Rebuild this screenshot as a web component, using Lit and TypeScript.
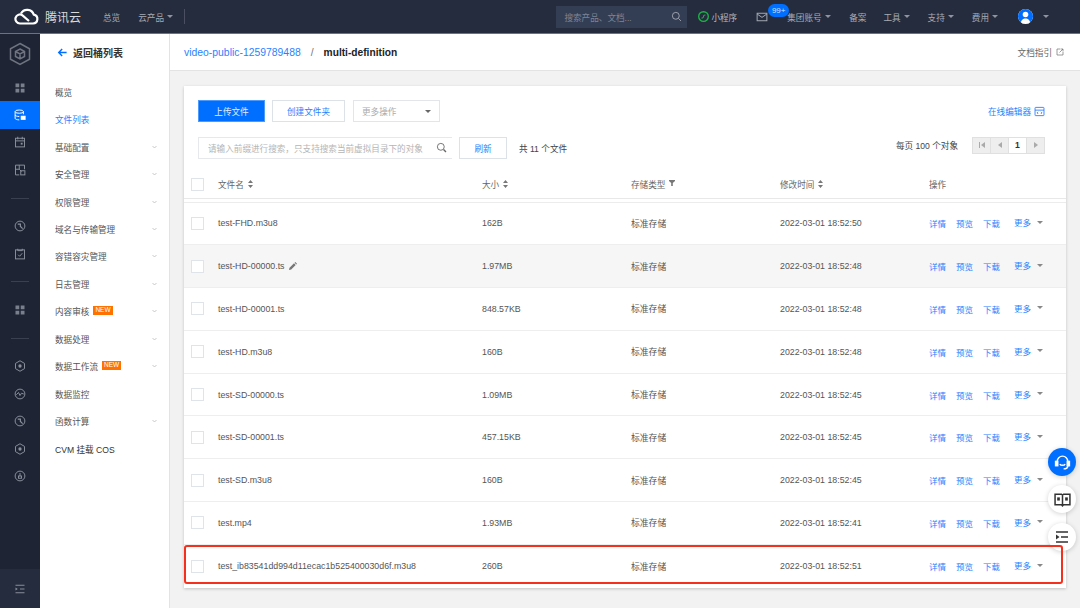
import { LitElement, html, css, svg } from "lit";
import { customElement } from "lit/decorators.js";

const files = [
  ["test-FHD.m3u8", "162B", "2022-03-01 18:52:50"],
  ["test-HD-00000.ts", "1.97MB", "2022-03-01 18:52:48"],
  ["test-HD-00001.ts", "848.57KB", "2022-03-01 18:52:48"],
  ["test-HD.m3u8", "160B", "2022-03-01 18:52:48"],
  ["test-SD-00000.ts", "1.09MB", "2022-03-01 18:52:45"],
  ["test-SD-00001.ts", "457.15KB", "2022-03-01 18:52:45"],
  ["test-SD.m3u8", "160B", "2022-03-01 18:52:45"],
  ["test.mp4", "1.93MB", "2022-03-01 18:52:41"],
  ["test_ib83541dd994d11ecac1b525400030d6f.m3u8", "260B", "2022-03-01 18:52:51"],
];

const navItems: [string, boolean, boolean][] = [
  ["概览", false, false],
  ["文件列表", false, false],
  ["基础配置", true, false],
  ["安全管理", true, false],
  ["权限管理", true, false],
  ["域名与传输管理", true, false],
  ["容错容灾管理", true, false],
  ["日志管理", true, false],
  ["内容审核", true, true],
  ["数据处理", true, false],
  ["数据工作流", true, true],
  ["数据监控", false, false],
  ["函数计算", true, false],
  ["CVM 挂载 COS", false, false],
];

const ic = (w: number, body: unknown, vb = "0 0 16 16") => html`<svg width=${w} height=${w} viewBox=${vb} fill="none" stroke="currentColor" stroke-width="1.3">${body}</svg>`;

const grid = svg`<rect x="2" y="2" width="5" height="5"/><rect x="9" y="2" width="5" height="5"/><rect x="2" y="9" width="5" height="5"/><rect x="9" y="9" width="5" height="5"/>`;
const gauge = svg`<circle cx="8" cy="8" r="6.500"/><path d="M8 8l3.500 3.500M5 5.500h3.500v3" stroke-width="1.600"/>`;
const hexa = svg`<path d="M8 1l6 3.500v7L8 15l-6-3.500v-7z"/><circle cx="8" cy="8" r="2.200" fill="currentColor" stroke="none"/>`;

const railTop = [
  svg`<g fill="currentColor" stroke="none" opacity=".85">${grid}</g>`,
  svg`<ellipse cx="7" cy="3.500" rx="5.500" ry="2.200"/><path d="M1.500 3.500v9c0 1 2.500 2 5.500 2M12.500 3.500V7M1.500 8c0 1 2.500 2 5.500 2"/><rect x="9" y="9" width="6.500" height="5.500" fill="currentColor" stroke="none"/>`,
  svg`<rect x="2" y="3" width="12" height="11.500"/><path d="M2 6.500h12M5 1v3.500M11 1v3.500"/><rect x="9" y="9" width="2.500" height="2.500" fill="currentColor" stroke="none"/>`,
  svg`<path d="M14 7V1.500H2v13h5M2 7h5V1.500M7 7l3 3"/><rect x="9" y="9" width="5.500" height="5.500"/>`,
];

@customElement("app-root")
export class AppRoot extends LitElement {
  static styles = css`
    :host { display: block; width: 1080px; height: 608px; overflow: hidden; position: relative; font-family: "Liberation Sans", "Noto Sans CJK SC", sans-serif; font-size: 8.6px; color: #444; background: #f2f2f2; white-space: nowrap; }
    svg { display: block; flex: none; }
    .top { height: 33px; background: #252c3d; border-bottom: 1px solid #6d7280; display: flex; align-items: center; color: #a6abb5; }
    .logo { margin-left: 14px; color: #fff; }
    .brand { margin-left: 6px; width: 58px; font-size: 12px; color: #d8dade; }
    .tnav { display: flex; align-items: center; }
    .caret { width: 0; height: 0; border: 3px solid transparent; border-top: 3.500px solid #8f94a0; border-bottom: 0; margin-left: 3px; flex: none; }
    .sep { width: 1px; height: 15px; background: #4a5062; margin-left: 11px; }
    .tsearch { margin-left: auto; width: 131px; height: 22px; background: #333e55; display: flex; align-items: center; justify-content: space-between; padding: 0 5px 0 8px; box-sizing: border-box; color: #7e8596; }
    .tsearch svg { color: #a6abb5; }
    .mini { display: flex; align-items: center; gap: 2px; margin-left: 11px; color: #b5b9c1; }
    .mail { margin-left: 19px; position: relative; color: #a6abb5; }
    .badge { position: absolute; left: 12px; top: -7px; width: 21px; height: 13px; border-radius: 7px; background: #006eff; color: #cfe2ff; font-size: 8px; display: flex; align-items: center; justify-content: center; }
    .avatar { width: 15px; height: 15px; border-radius: 50%; background: #fff; overflow: hidden; margin-left: 20px; }
    .user-caret { margin: 0 31px 0 10px; }
    .body { display: flex; height: 574px; }
    .rail { width: 40px; background: #1e2433; display: flex; flex-direction: column; align-items: stretch; color: #8b909c; flex: none; }
    .rail-logo { height: 40px; display: flex; align-items: center; justify-content: center; flex: none; color: #6f7480; }
    .rail-item { height: 27.400px; display: flex; align-items: center; justify-content: center; flex: none; }
    .rail-item.on { background: #006eff; color: #fff; }
    .rail-div { height: 1px; width: 18px; background: #3a4050; margin: 14px auto; flex: none; }
    .rail-bottom { margin-top: auto; height: 39px; background: #252c3d; display: flex; align-items: center; justify-content: center; }
    .nav { width: 129px; background: #fff; border-right: 1px solid #e3e3e3; flex: none; }
    .back { height: 36px; display: flex; align-items: center; padding-left: 17px; gap: 5px; font-size: 10px; font-weight: 700; color: #333; }
    .back svg { color: #006eff; }
    .nav-list { padding-top: 8px; }
    .nav-item { height: 27.460px; display: flex; align-items: center; padding: 0 12px 0 15px; color: #555; }
    .nav-item.on { color: #2b7fff; }
    .nav-item.plain { color: #333; }
    .chev { margin-left: auto; color: #bbb; }
    .new { margin: -2px 0 0 4px; background: #ff7200; color: #fff; font-size: 6.500px; padding: 1.500px 2px; line-height: 6px; }
    .main { flex: 1; min-width: 0; }
    .head { height: 36px; background: #fff; border-bottom: 1px solid #e3e3e3; display: flex; align-items: center; padding: 0 16px 0 14px; font-size: 10.400px; }
    .head .link { color: #2b7fff; }
    .slash { margin: 0 10px; color: #777; }
    .cur { font-weight: 700; color: #222; font-size: 10.200px; }
    .doc { margin-left: auto; font-size: 8.600px; color: #666; display: flex; align-items: center; gap: 4px; }
    .content { padding: 14.500px 14px 0; }
    .card { background: #fff; height: 502px; box-shadow: 0 1px 3px rgba(0,0,0,.2); box-sizing: border-box; padding-top: 14.500px; }
    .tool { display: flex; align-items: center; padding: 0 21px 0 14px; height: 22px; }
    .tool + .tool { margin-top: 14.500px; }
    .btn { height: 22px; box-sizing: border-box; border: 1px solid #dde1e8; color: #2b7fff; display: flex; align-items: center; justify-content: center; background: #fff; flex: none; }
    .btn.pri { width: 67px; background: #006eff; border-color: #4d9aff; color: #e3eeff; }
    .btn.mk { width: 73px; margin-left: 7px; }
    .select { width: 87px; height: 22px; box-sizing: border-box; margin-left: 8px; border: 1px solid #e3e5ea; color: #aaa; display: flex; align-items: center; justify-content: space-between; padding: 0 8px; }
    .select .caret { border-top-color: #666; }
    .editor { margin-left: auto; display: flex; align-items: center; gap: 3px; color: #2b7fff; }
    .input { width: 254px; height: 22px; box-sizing: border-box; border: 1px solid #e6e8ec; border-right: 0; color: #b5b5b5; display: flex; align-items: center; justify-content: space-between; padding: 0 5px 0 9px; flex: none; }
    .input svg { color: #666; }
    .btn.ref { width: 48px; margin-left: 7px; }
    .count { margin-left: 12px; color: #444; }
    .per { margin-left: auto; color: #444; margin-top: -5px; }
    .pager { margin-left: 14px; display: flex; width: 73px; height: 17px; border: 1px solid #e0e0e0; box-sizing: border-box; margin-top: -5px; }
    .pg { flex: 1; display: flex; align-items: center; justify-content: center; background: #eee; color: #aaa; border-right: 1px solid #e0e0e0; }
    .pg:last-child { border-right: 0; }
    .pg.cur-p { background: #fff; color: #333; font-weight: 700; }
    .row, .thead { display: grid; grid-template-columns: 34px 264px 149px 149px 149px 1fr; align-items: center; }
    .thead { height: 27px; margin-top: 12px; border-bottom: 1px solid #e8e8e8; color: #666; }
    .gapline { height: 3px; border-bottom: 1px solid #ececec; }
    .row { height: 42.800px; box-sizing: border-box; border-bottom: 1px solid #eee; color: #555; font-size: 8.800px; }
    .row:last-child { border-bottom: 0; }
    .row.hov { background: #f6f6f6; }
    .cb { width: 13px; height: 13px; margin-left: 7px; border: 1px solid #dfe3ea; box-sizing: border-box; background: #fff; }
    .th { display: flex; align-items: center; gap: 4px; }
    .sort { color: #777; }
    .filter { margin-top: -3px; }
    .name { display: flex; align-items: center; gap: 4px; }
    .name svg { color: #777; }
    .ops { display: flex; align-items: center; color: #2b7fff; gap: 10px; font-size: 8.500px; }
    .more { display: flex; align-items: center; margin-left: 4px; margin-top: -2px; }
    .more .caret { margin-left: 6px; border-top-color: #888; }
    .fab { position: absolute; left: 1048px; width: 28px; height: 28px; border-radius: 50%; background: #fff; box-shadow: 0 1px 5px rgba(0,0,0,.18); display: flex; align-items: center; justify-content: center; color: #333; }
    .fab.blue { background: #006eff; color: #fff; top: 448px; }
    .fab.book { top: 485px; }
    .fab.list { top: 523px; }
    .mark { position: absolute; left: 184px; top: 545px; width: 879px; height: 39px; box-sizing: border-box; border: 2px solid #f5301c; border-radius: 3px; pointer-events: none; }
  `;

  private sortIcon() {
    return html`<svg class="sort" width="5" height="8" viewBox="0 0 5 8" fill="currentColor" stroke="none"><path d="M2.500 0L5 3H0zM2.500 8L0 5h5z"/></svg>`;
  }

  render() {
    const tItem = (t: string, ml: number, caret = true) => html`<div class="tnav" style="margin-left:${ml}px">${t}${caret ? html`<span class="caret"></span>` : ""}</div>`;
    return html`
      <div class="top">
        <svg class="logo" width="25" height="17" viewBox="0 0 25 17" fill="none" stroke="currentColor" stroke-width="2.200"><path d="M6 15.500h13a4.500 4.500 0 0 0 .8-8.900A7 7 0 0 0 7 5.500"/><path d="M6 15.500a4.500 4.500 0 1 1 2.500-8.200L15 13"/></svg>
        <div class="brand">腾讯云</div>
        ${tItem("总览", 0, false)}
        ${tItem("云产品", 18)}
        <div class="sep"></div>
        <div class="tsearch"><span>搜索产品、文档...</span>${ic(11, svg`<circle cx="7" cy="7" r="5"/><path d="M11 11l3.500 3.500"/>`)}</div>
        <div class="mini">
          <svg width="11" height="11" viewBox="0 0 16 16" fill="none" stroke="#1fb14a" stroke-width="2"><circle cx="8" cy="8" r="7"/><path d="M5 10c2 1 3-1 3-2s1-3 3-2" stroke-width="1.500"/></svg>
          <span>小程序</span>
        </div>
        <div class="mail">${ic(12, svg`<rect x="1.500" y="3" width="13" height="10"/><path d="M1.500 4l6.500 4.500L14.500 4"/>`)}<span class="badge">99+</span></div>
        ${tItem("集团账号", 19)}
        ${tItem("备案", 18.600, false)}
        ${tItem("工具", 17)}
        ${tItem("支持", 18)}
        ${tItem("费用", 18)}
        <div class="avatar">
          <svg width="15" height="15" viewBox="0 0 15 15"><rect width="15" height="15" fill="#006eff"/><circle cx="7.500" cy="5.500" r="2.800" fill="#fff"/><path d="M2.500 15c.5-4 2.500-5.500 5-5.500s4.500 1.500 5 5.500z" fill="#fff"/></svg>
        </div>
        <span class="caret user-caret"></span>
      </div>
      <div class="body">
        <div class="rail">
          <div class="rail-logo">
            <svg width="24" height="24" viewBox="0 0 24 24" fill="none" stroke="currentColor" stroke-width="1.500"><path d="M12 1.500l9.500 5.300v10.400L12 22.500l-9.500-5.300V6.800z"/><path d="M12 7l4.500 2.500v5L12 17l-4.500-2.500v-5zM7.500 9.500L12 12l4.500-2.500M12 12v5"/></svg>
          </div>
          ${railTop.map((b, i) => html`<div class="rail-item ${i === 1 ? "on" : ""}">${ic(12, b)}</div>`)}
          <div class="rail-div"></div>
          <div class="rail-item">${ic(12, gauge)}</div>
          <div class="rail-item">${ic(12, svg`<rect x="2" y="2.500" width="12" height="12"/><path d="M5 1v2.500h6V1M5.500 9l2 2 3.500-4"/>`)}</div>
          <div class="rail-div"></div>
          <div class="rail-item">${ic(12, svg`<g fill="currentColor" stroke="none" opacity=".85">${grid}</g>`)}</div>
          <div class="rail-div"></div>
          <div class="rail-item">${ic(12, hexa)}</div>
          <div class="rail-item">${ic(12, svg`<circle cx="8" cy="8" r="6.500"/><path d="M3 9l3-3 2 4 2-3 3 1"/>`)}</div>
          <div class="rail-item">${ic(12, gauge)}</div>
          <div class="rail-item">${ic(12, hexa)}</div>
          <div class="rail-item">${ic(12, svg`<circle cx="8" cy="8" r="6.500"/><path d="M8 4v4"/><rect x="6" y="8" width="4" height="3"/>`)}</div>
          <div class="rail-bottom">${ic(12, svg`<path d="M2 3h12M8 8h6M2 13h12"/><path d="M2 6l3 2-3 2z" fill="currentColor" stroke="none"/>`)}</div>
        </div>
        <div class="nav">
          <div class="back">
            ${ic(11, svg`<path d="M14 8H2.500M7.500 3l-5 5 5 5" stroke-width="2"/>`)}
            <span>返回桶列表</span>
          </div>
          <div class="nav-list">
            ${navItems.map(([t, chev, isNew], i) => html`
              <div class="nav-item ${i === 1 ? "on" : ""} ${i === 13 ? "plain" : ""}">
                <span>${t}</span>
                ${isNew ? html`<span class="new">NEW</span>` : ""}
                ${chev ? html`<svg class="chev" width="5" height="4" viewBox="0 0 5 4" fill="none" stroke="currentColor" stroke-width=".8"><path d="M.5 1l2 2 2-2"/></svg>` : ""}
              </div>`)}
          </div>
        </div>
        <div class="main">
          <div class="head">
            <span class="link">video-public-1259789488</span>
            <span class="slash">/</span>
            <span class="cur">multi-definition</span>
            <span class="doc">文档指引 ${ic(8, svg`<path d="M8 2H2v12h12V8M9 2h5v5M14 2L7 9"/>`)}</span>
          </div>
          <div class="content">
            <div class="card">
              <div class="tool">
                <div class="btn pri">上传文件</div>
                <div class="btn mk">创建文件夹</div>
                <div class="select"><span>更多操作</span><span class="caret"></span></div>
                <div class="editor">在线编辑器 ${ic(11, svg`<rect x="1.500" y="2" width="13" height="12" rx="1"/><path d="M1.500 6h13M6 8.500L4.500 10 6 11.500M10 8.500l1.500 1.500-1.500 1.500"/>`)}</div>
              </div>
              <div class="tool">
                <div class="input"><span>请输入前缀进行搜索，只支持搜索当前虚拟目录下的对象</span>${ic(11, svg`<circle cx="7" cy="7" r="5"/><path d="M11 11l3.500 3.500" stroke-width="2"/>`)}</div>
                <div class="btn ref">刷新</div>
                <span class="count">共 11 个文件</span>
                <span class="per">每页 100 个对象</span>
                <div class="pager">
                  <div class="pg"><svg width="6" height="6" viewBox="0 0 6 6" fill="currentColor"><path d="M0 0h1v6H0zM6 0v6L2 3z"/></svg></div>
                  <div class="pg"><svg width="4" height="6" viewBox="0 0 4 6" fill="currentColor"><path d="M4 0v6L0 3z"/></svg></div>
                  <div class="pg cur-p">1</div>
                  <div class="pg"><svg width="4" height="6" viewBox="0 0 4 6" fill="currentColor"><path d="M0 0v6l4-3z"/></svg></div>
                </div>
              </div>
              <div class="thead">
                <div class="cb"></div>
                <div class="th">文件名 ${this.sortIcon()}</div>
                <div class="th">大小 ${this.sortIcon()}</div>
                <div class="th">存储类型 <svg class="filter" width="6" height="6" viewBox="0 0 6 6" fill="#777"><path d="M0 0h6v1L3.800 3v3H2.200V3L0 1z"/></svg></div>
                <div class="th">修改时间 ${this.sortIcon()}</div>
                <div class="th">操作</div>
              </div>
              <div class="gapline"></div>
              ${files.map((f, i) => html`
                <div class="row ${i === 1 ? "hov" : ""}">
                  <div class="cb"></div>
                  <div class="name">${f[0]}${i === 1 ? html`<svg width="8" height="8" viewBox="0 0 8 8" fill="currentColor"><path d="M0 8l.5-2.200L5 1.300 6.700 3 2.200 7.500zM5.600.7l.7-.7L8 1.700l-.7.7z"/></svg>` : ""}</div>
                  <div>${f[1]}</div>
                  <div>标准存储</div>
                  <div>${f[2]}</div>
                  <div class="ops"><span>详情</span><span>预览</span><span>下载</span><span class="more">更多<span class="caret"></span></span></div>
                </div>`)}
            </div>
          </div>
        </div>
      </div>
      <div class="fab blue">
        <svg width="17" height="17" viewBox="0 0 16 16" fill="none" stroke="currentColor" stroke-width="1.400"><path d="M3 10V7a5 5 0 0 1 10 0v3"/><rect x="1.500" y="7" width="2" height="4" fill="currentColor"/><rect x="12.500" y="7" width="2" height="4" fill="currentColor"/><path d="M5.500 9.500c1 1.500 4 1.500 5 0M13 11c0 2-2 3-4 3"/></svg>
      </div>
      <div class="fab book">
        <svg width="17" height="17" viewBox="0 0 16 16" fill="none" stroke="currentColor" stroke-width="1.400"><path d="M1 3h6l1 1 1-1h6v10H9l-1 1-1-1H1zM8 4v10"/><rect x="3" y="6" width="2.500" height="3" fill="currentColor" stroke="none"/><rect x="10.500" y="6" width="2.500" height="3" fill="currentColor" stroke="none"/></svg>
      </div>
      <div class="fab list">
        <svg width="16" height="16" viewBox="0 0 16 16" fill="none" stroke="currentColor" stroke-width="1.500"><path d="M2 3h12M7 8h7M2 13h12"/><path d="M2 5.500L5.500 8 2 10.500z" fill="currentColor" stroke="none"/></svg>
      </div>
      <div class="mark"></div>
    `;
  }
}
